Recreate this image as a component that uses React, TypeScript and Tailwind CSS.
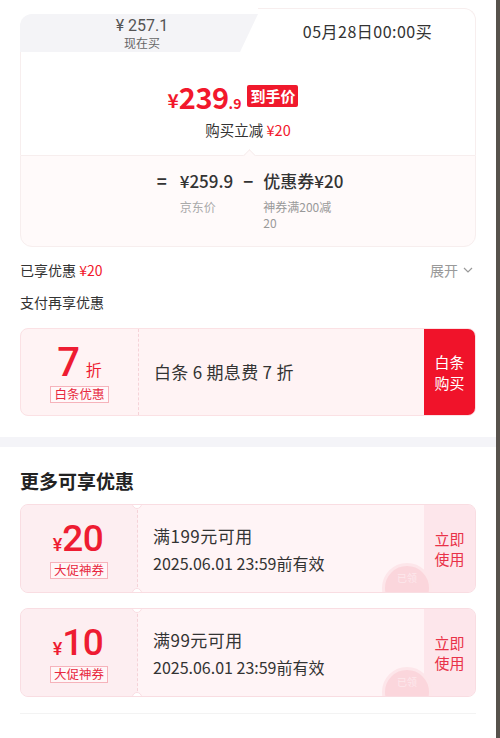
import React from "react";

const font = {
  fontFamily: '"Noto Sans CJK SC", "Noto Sans", sans-serif',
};

function Coupon({ amount, cond }: { amount: string; cond: string }) {
  return (
    <div className="relative flex h-[89px] rounded-[8px] border border-[#f9dde2] bg-[#fdf0f3] overflow-hidden">
      <div className="w-[116px] flex flex-col items-center justify-center bg-[#fdeef1]">
        <div className="flex items-baseline text-[#ee1c32] font-['Roboto',sans-serif] pr-[2px]">
          <span className="text-[18px] font-medium">¥</span>
          <span className="text-[37px] leading-[42px] font-medium tracking-[-0.5px]">{amount}</span>
        </div>
        <div className="mt-[2px] px-[3px] h-[17px] flex items-center border border-[#f6b3bb] bg-[#fff7f8] text-[12.5px] leading-none text-[#e8283e]">
          大促神券
        </div>
      </div>
      <div className="w-0 border-l border-dashed border-[#f5d3d8]" />
      <div className="relative flex-1 flex flex-col justify-center pl-[15px] bg-[#fff4f6]">
        <div className="text-[17px] leading-[24px] text-[#333] tracking-[0.5px]">{cond}</div>
        <div className="mt-[4px] text-[16px] leading-[22px] text-[#333]">2025.06.01 23:59前有效</div>
        <div className="absolute right-[-8px] top-[58px] w-[50px] h-[50px] rounded-full bg-[#fbd6dc] border-[3px] border-[#fde6ea] flex items-start justify-center pt-[7px]">
          <span className="text-[10px] text-[#fde8ec] leading-none">已领</span>
        </div>
      </div>
      <div className="w-[51px] flex flex-col items-center justify-center bg-[#fde6eb] text-[15px] leading-[20px] text-[#e93248]">
        <span>立即</span>
        <span>使用</span>
      </div>
      <div className="absolute left-[111px] top-[-6px] w-[10px] h-[10px] rounded-full bg-white border border-[#f9dde2]" />
      <div className="absolute left-[111px] bottom-[-6px] w-[10px] h-[10px] rounded-full bg-white border border-[#f9dde2]" />
    </div>
  );
}

export default function App() {
  return (
    <div className="flex w-[500px] h-[738px] overflow-hidden" style={font}>
      <div className="w-[496px] h-full bg-white flex flex-col">
        <div className="px-5 pt-[8px]">
          {/* top card */}
          <div className="flex flex-col">
            <div className="relative flex h-[44px]">
              <div className="w-[238px] mt-[6px] h-[38px] bg-[#f4f4f7] rounded-tl-[12px] [clip-path:polygon(0_0,100%_0,calc(100%-18px)_100%,0_100%)] flex flex-col items-center justify-center pl-[6px]">
                <div className="text-[16px] leading-[18px] text-[#555] font-['Roboto',sans-serif]">¥ 257.1</div>
                <div className="text-[12px] leading-[15px] text-[#666]">现在买</div>
              </div>
              <div className="flex-1 flex items-center justify-center rounded-tr-[12px] border-t border-r border-[#f7eeee] pl-[2px]">
                <span className="text-[16px] text-[#333] tracking-[0.5px]">05月28日00:00买</span>
              </div>
            </div>
            <div className="h-[103px] flex flex-col items-center pt-[30px] border-x border-[#f7eeee] bg-white">
              <div className="flex items-center h-[28px] pr-[30px]">
                <div className="flex items-end text-[#f2182c] font-bold leading-none">
                  <span className="text-[19px] mb-[2px]">¥</span>
                  <span className="text-[29px] tracking-[-0.5px]">239</span>
                  <span className="text-[14px] mb-[1px]">.9</span>
                </div>
                <div className="ml-[6px] h-[22px] px-[3px] bg-[#f0192c] rounded-[2px] text-white text-[15px] font-bold leading-[22px]">
                  到手价
                </div>
              </div>
              <div className="mt-[10px] text-[14.5px] leading-[20px] text-[#333]">
                购买立减 <span className="text-[#f2182c]">¥20</span>
              </div>
            </div>
            <div className="relative h-[92px] bg-[#fffafa] border border-[#f7eeee] rounded-b-[12px] flex justify-center pt-[13px]">
              <div className="absolute left-[224px] top-[-5px] w-[9px] h-[9px] rotate-45 bg-[#fffafa] border-l border-t border-[#f7eeee]" />
              <div className="flex items-start text-[17px] leading-[24px] text-[#333] pl-[4px]">
                <span className="font-bold mr-[13px]">=</span>
                <div className="flex flex-col">
                  <span className="font-medium">¥259.9</span>
                  <span className="mt-[6px] text-[12px] leading-[16px] text-[#aaa]">京东价</span>
                </div>
                <span className="mx-[10px] font-bold">−</span>
                <div className="flex flex-col w-[80px]">
                  <span className="font-medium whitespace-nowrap">优惠券¥20</span>
                  <span className="mt-[6px] w-[74px] text-[12px] leading-[16px] text-[#999] break-all">
                    神券满200减20
                  </span>
                </div>
              </div>
            </div>
          </div>

          <div className="mt-[14px] flex items-center justify-between h-[18px]">
            <div className="text-[14px] text-[#333]">
              已享优惠 <span className="text-[#f2182c]">¥20</span>
            </div>
            <div className="flex items-center text-[14px] text-[#999] pr-[2px]">
              展开
              <svg width="12" height="12" viewBox="0 0 12 12" className="ml-[4px]">
                <path d="M2 4l4 4 4-4" fill="none" stroke="#999" strokeWidth="1.2" />
              </svg>
            </div>
          </div>
          <div className="mt-[14px] h-[18px] flex items-center text-[14px] text-[#333]">支付再享优惠</div>

          <div className="mt-[17px] h-[88px] flex rounded-[8px] border border-[#fbe1e4] bg-[#fff3f4] overflow-hidden">
            <div className="w-[117px] flex flex-col items-center justify-center">
              <div className="flex items-baseline text-[#ee1c32]">
                <span className="text-[40px] leading-[42px] font-medium font-['Roboto',sans-serif]">7</span>
                <span className="text-[16px] ml-[6px]">折</span>
              </div>
              <div className="mt-[2px] px-[3px] h-[17px] flex items-center border border-[#f6b3bb] bg-[#fff9fa] text-[12.5px] leading-none text-[#e8283e]">
                白条优惠
              </div>
            </div>
            <div className="w-0 border-l border-dashed border-[#f5d3d8]" />
            <div className="flex-1 flex items-center pl-[15px] text-[17px] text-[#333] tracking-[0.3px]">
              白条 6 期息费 7 折
            </div>
            <div className="w-[51px] bg-[#f0132a] flex flex-col items-center justify-center text-white text-[15px] leading-[21px]">
              <span>白条</span>
              <span>购买</span>
            </div>
          </div>
        </div>

        <div className="mt-[21px] h-[10px] bg-[#f4f4f8]" />

        <div className="px-5 pt-[21px]">
          <div className="text-[19px] leading-[26px] font-bold text-[#222]">更多可享优惠</div>
          <div className="mt-[10px] flex flex-col gap-[15px]">
            <Coupon amount="20" cond="满199元可用" />
            <Coupon amount="10" cond="满99元可用" />
          </div>
          <div className="mt-[16px] border-t border-[#f3f3f3]" />
        </div>
      </div>
      <div className="w-[4px] h-full bg-[#57524c]" />
    </div>
  );
}
